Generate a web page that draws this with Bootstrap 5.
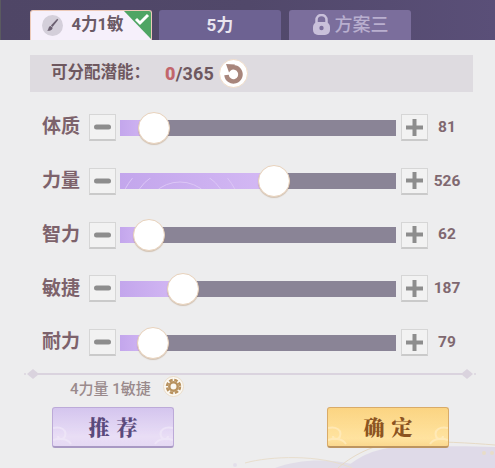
<!DOCTYPE html>
<html lang="zh">
<head>
<meta charset="utf-8">
<link href="https://cdn.jsdelivr.net/npm/bootstrap@5.3.0/dist/css/bootstrap.min.css" rel="stylesheet">
<style>
html,body{width:495px;height:468px;overflow:hidden;margin:0}
body{background:#ededee;font-family:"Roboto","Noto Sans CJK SC",sans-serif;position:relative;color:#7b6068}
.deco{position:absolute;left:0;bottom:0;width:495px;height:40px;z-index:0}
.page{position:relative;z-index:1;height:468px}
.topband{height:40px;background:linear-gradient(90deg,#4f4666,#51486a 50%,#5a4f78);padding-left:29px;gap:7px;border-left:1px solid #5a5a60}
.tabx{width:122px;height:30px;margin-top:10px;border-radius:3px 3px 0 0;font-weight:700;font-size:17px;line-height:30px;text-align:center}
.tab-on{background:#f6f0fb;color:#6a5a66;position:relative;border:1px solid #ecc9b8;border-bottom:0;line-height:28px;padding-left:13px;overflow:hidden;font-size:16.5px}
.tab-mid{background:#6d6292;color:#e9e5ef}
.tab-lock{background:#7b6e9c;color:#b9afcf;font-weight:500;font-size:18px;margin-left:1px}
.brush{position:absolute;left:11px;top:4px}
.corner{position:absolute;right:-1px;top:-1px}
.pointsbar{margin:15px 22px 0 30px;height:37px;background:#dedbe0;padding-left:21px;font-weight:700;font-size:16.5px;color:#6e585f}
.numtxt{font-size:18px;letter-spacing:.2px}
.numtxt b{color:#c2666c;margin-left:15px}
.refresh{width:29px;height:29px;margin-left:5px;flex:none}
.rowsbox{margin-top:22px}
.statrow{height:27px;margin-bottom:26.75px;padding-left:42px}
.statname{width:47px;font-weight:700;font-size:19px;color:#7d626b}
.stepbtn{width:27px;height:27px;background:#f2f2f2;border:1px solid #d6d6d6;border-bottom:2px solid #cacaca;padding:0;flex:none;display:flex;align-items:center;justify-content:center}
.trk{width:276px;height:16px;margin:0 5px 0 4px;background:#8a8496;position:relative;flex:none}
.trkfill{height:16px;background:linear-gradient(90deg,#c3a6ec,#d4b9f4);overflow:hidden}
.thumbx{position:absolute;top:-8px;width:32px;height:32px;margin-left:-16px;border-radius:50%;background:#fff;border:1px solid #e8d2bc;box-shadow:0 1px 1px rgba(170,130,90,.4)}
.statval{width:38px;text-align:center;font-weight:700;font-size:15.5px;color:#806870}
.divline{margin:-14px 19px 0 24px;height:10px;position:relative}
.sugg{padding-left:70px;height:26px;font-size:15px;font-weight:500;color:#9a8a8c;margin-top:-3px}
.gear{margin-left:12px;margin-top:-4px;flex:none}
.btnrow{padding:0 46px 0 52px;margin-top:5px}
.gamebtn{position:relative;width:122px;height:41px;border-radius:3px;font-family:"Noto Serif CJK SC","Noto Sans CJK SC",serif;font-weight:900;font-size:21px;letter-spacing:7px;padding:0 0 0 7px;display:flex;align-items:center;justify-content:center;overflow:hidden}
.btn-pur{background:linear-gradient(180deg,#d4c5ee,#e9def6 75%,#e5d9f3);border:1px solid #bcaad8;border-bottom:2px solid #a999c4;color:#5a4a7c}
.btn-gold{background:linear-gradient(180deg,#fbd482,#ffe3a0 80%,#fbd98f);border:1px solid #d9ab68;border-bottom:2px solid #bd9560;color:#8c5522}
.cloud{position:absolute;left:0;bottom:0;width:120px;height:22px;opacity:.7}
</style>
</head>
<body>
<svg class="deco" viewBox="0 0 495 40" aria-hidden="true">
<path d="M275 40C300 30 340 30 365 40Z" fill="#e1dde8"/>
<path d="M345 40C360 28 375 20 400 19C440 18 470 18 495 19V40Z" fill="#dfdae8"/>
<path d="M245 35C270 28 320 26 352 40" fill="none" stroke="#e8decd"/>
<path d="M338 40C355 25 380 14 402 14C440 13 470 15 495 17" fill="none" stroke="#e6dac6"/>
<circle cx="484" cy="25" r="2" fill="#e8dcc8"/><circle cx="492" cy="25" r="2" fill="#e8dcc8"/><circle cx="235" cy="37" r="2" fill="#e3dfea"/>
</svg>
<div class="page d-flex flex-column">
  <div class="topband d-flex">
    <div class="tabx tab-on">4力1敏
      <svg class="brush" width="21" height="21" viewBox="0 0 20 20"><circle cx="10" cy="10" r="10" fill="#d4cfda"/><path d="M14.500 3.500 8.500 10l1.500 1.500 5.500-7z" fill="#6b5f70"/><path d="M8 10.500c-2 .5-1.500 3-3 4.500 3 .5 5.500-1 5-3z" fill="#6b5f70"/></svg>
      <svg class="corner" width="30" height="30" viewBox="0 0 30 30"><path d="M1 0H30V30Z" fill="#4fa564"/><path d="m14 9 4 4 8-8" fill="none" stroke="#fff" stroke-width="3"/></svg>
    </div>
    <div class="tabx tab-mid">5力</div>
    <div class="tabx tab-lock d-flex align-items-center justify-content-center">
      <svg width="19" height="22" viewBox="0 0 19 22" class="me-1"><path d="M4.500 9V6a5 5 0 0 1 10 0v3" fill="none" stroke="#c9c0da" stroke-width="2.500"/><rect x="1" y="8" width="17" height="13" rx="5" fill="#c9c0da"/><circle cx="9.500" cy="14" r="2.200" fill="#7b6e9c"/></svg>方案三
    </div>
  </div>
  <div class="pointsbar d-flex align-items-center">可分配潜能：<span class="numtxt"><b>0</b>/365</span>
    <svg class="refresh" viewBox="0 0 29 29"><circle cx="14.500" cy="14.500" r="14" fill="#fff" stroke="#f0dcc8"/><path d="M10 10a7 7 0 1 1-2.500 6" fill="none" stroke="#a8867c" stroke-width="4.500"/><path d="M7 5l9 .5-6 8z" fill="#a8867c"/></svg>
  </div>
  <div class="rowsbox">
    <div class="statrow d-flex align-items-center">
      <div class="statname">体质</div>
      <button class="stepbtn"><svg width="17" height="6"><rect width="17" height="5" y=".5" rx="2.500" fill="#8d8d8d"/></svg></button>
      <div class="trk"><div class="trkfill" style="width:34px"></div><div class="thumbx" style="left:34px"></div></div>
      <button class="stepbtn"><svg width="17" height="17"><path d="M6.500 0h4v6.500H17v4h-6.500V17h-4v-6.500H0v-4h6.500z" fill="#8d8d8d"/></svg></button>
      <div class="statval">81</div>
    </div>
    <div class="statrow d-flex align-items-center">
      <div class="statname">力量</div>
      <button class="stepbtn"><svg width="17" height="6"><rect width="17" height="5" y=".5" rx="2.500" fill="#8d8d8d"/></svg></button>
      <div class="trk"><div class="trkfill" style="width:154px"><svg width="154" height="16"><g fill="none" stroke="#dcc6f6"><circle cx="60" cy="40" r="36"/><circle cx="60" cy="40" r="50"/><circle cx="60" cy="40" r="62"/></g></svg></div><div class="thumbx" style="left:154px"></div></div>
      <button class="stepbtn"><svg width="17" height="17"><path d="M6.500 0h4v6.500H17v4h-6.500V17h-4v-6.500H0v-4h6.500z" fill="#8d8d8d"/></svg></button>
      <div class="statval">526</div>
    </div>
    <div class="statrow d-flex align-items-center">
      <div class="statname">智力</div>
      <button class="stepbtn"><svg width="17" height="6"><rect width="17" height="5" y=".5" rx="2.500" fill="#8d8d8d"/></svg></button>
      <div class="trk"><div class="trkfill" style="width:29px"></div><div class="thumbx" style="left:29px"></div></div>
      <button class="stepbtn"><svg width="17" height="17"><path d="M6.500 0h4v6.500H17v4h-6.500V17h-4v-6.500H0v-4h6.500z" fill="#8d8d8d"/></svg></button>
      <div class="statval">62</div>
    </div>
    <div class="statrow d-flex align-items-center">
      <div class="statname">敏捷</div>
      <button class="stepbtn"><svg width="17" height="6"><rect width="17" height="5" y=".5" rx="2.500" fill="#8d8d8d"/></svg></button>
      <div class="trk"><div class="trkfill" style="width:63px"></div><div class="thumbx" style="left:63px"></div></div>
      <button class="stepbtn"><svg width="17" height="17"><path d="M6.500 0h4v6.500H17v4h-6.500V17h-4v-6.500H0v-4h6.500z" fill="#8d8d8d"/></svg></button>
      <div class="statval">187</div>
    </div>
    <div class="statrow d-flex align-items-center">
      <div class="statname">耐力</div>
      <button class="stepbtn"><svg width="17" height="6"><rect width="17" height="5" y=".5" rx="2.500" fill="#8d8d8d"/></svg></button>
      <div class="trk"><div class="trkfill" style="width:33px"></div><div class="thumbx" style="left:33px"></div></div>
      <button class="stepbtn"><svg width="17" height="17"><path d="M6.500 0h4v6.500H17v4h-6.500V17h-4v-6.500H0v-4h6.500z" fill="#8d8d8d"/></svg></button>
      <div class="statval">79</div>
    </div>
  </div>
  <svg class="divline" width="452" height="10" viewBox="0 0 452 10"><path d="M10 5H442" stroke="#dad3de" stroke-width="2"/><path d="M3 5l6-5 6 5-6 5z" fill="#dad3de"/><path d="M437 5l6-5 6 5-6 5z" fill="#dad3de"/><circle cx="1" cy="5" r="1" fill="#dad3de"/><circle cx="451" cy="5" r="1" fill="#dad3de"/></svg>
  <div class="sugg d-flex align-items-center">4力量 1敏捷
    <svg class="gear" width="21" height="21" viewBox="0 0 21 21"><circle cx="10.500" cy="10.500" r="10" fill="#fbf8f2" stroke="#eadcc8"/><circle cx="10.500" cy="10.500" r="6.500" fill="none" stroke="#b8925f" stroke-width="2.500" stroke-dasharray="3.500 1.600"/><circle cx="10.500" cy="10.500" r="4.200" fill="none" stroke="#b8925f" stroke-width="2.500"/></svg>
  </div>
  <div class="btnrow d-flex justify-content-between">
    <button class="gamebtn btn-pur"><svg class="cloud" viewBox="0 0 120 22"><g fill="none" stroke="#f0e8f8" stroke-width="2"><path d="M0 4c8-2 14 2 12 8-1 4-7 4-7 0M18 20c-4-6-12-6-18-4"/><path d="M120 4c-8-2-14 2-12 8 1 4 7 4 7 0M102 20c4-6 12-6 18-4"/></g></svg>推荐</button>
    <button class="gamebtn btn-gold"><svg class="cloud" viewBox="0 0 120 22"><g fill="none" stroke="#ffedc2" stroke-width="2"><path d="M0 4c8-2 14 2 12 8-1 4-7 4-7 0M18 20c-4-6-12-6-18-4"/><path d="M120 4c-8-2-14 2-12 8 1 4 7 4 7 0M102 20c4-6 12-6 18-4"/></g></svg>确定</button>
  </div>
</div>
</body>
</html>
